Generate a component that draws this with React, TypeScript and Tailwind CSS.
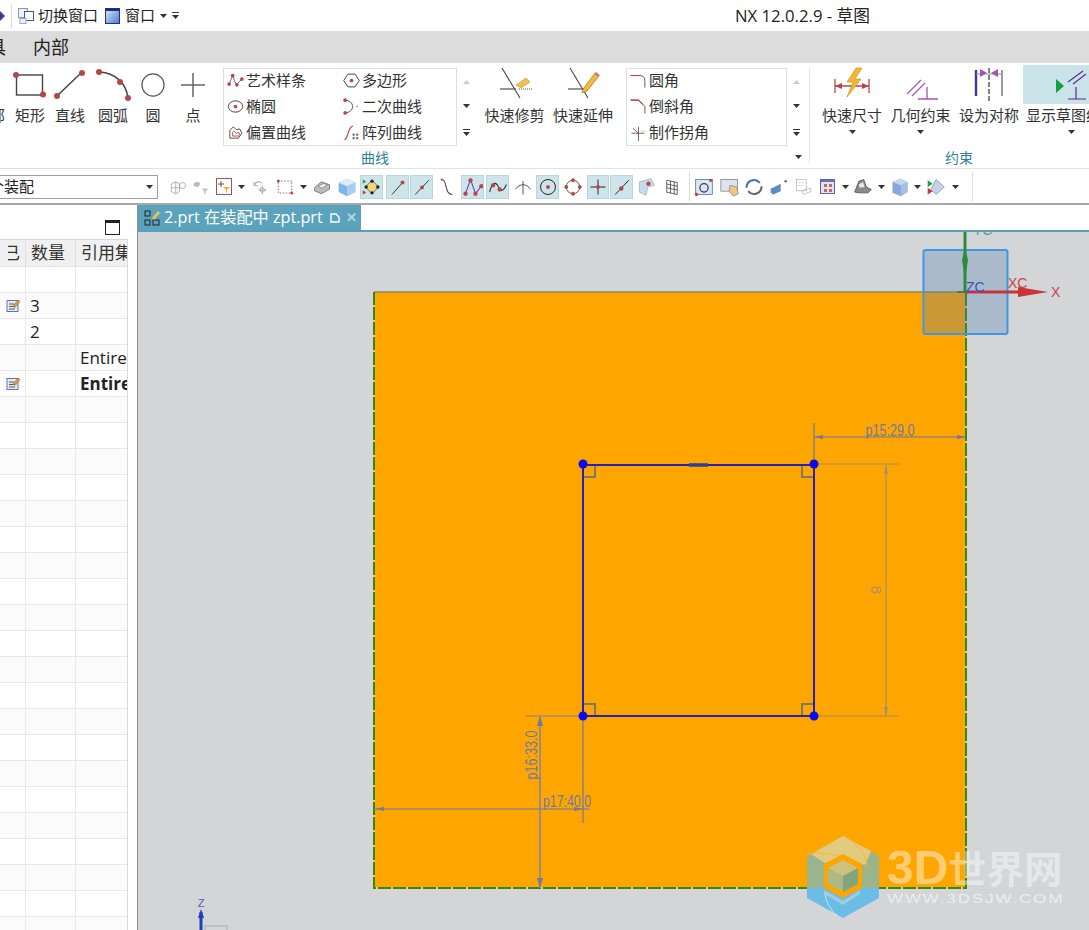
// NX sketch window: title bar, ribbon, toolbar, assembly navigator and graphics area

const FONT = '"Open Sans", "Noto Sans CJK SC", sans-serif';
const RED = '#b5474a';
const DIM = '#6f7aa0';

const Dot = ({ x, y, r = 2.6 }: { x: number; y: number; r?: number }) => <circle cx={x} cy={y} r={r} fill={RED} />;

const Svg = ({ size = 18, vb = 24, children }: { size?: number; vb?: number; children: React.ReactNode }) => (
  <svg width={size} height={size} viewBox={`0 0 ${vb} ${vb}`} fill="none" className="shrink-0">
    {children}
  </svg>
);

const Caret = () => (
  <svg width="7" height="4" viewBox="0 0 7 4" className="shrink-0">
    <path d="M0 0h7L3.5 4z" fill="#333" />
  </svg>
);

const CaretLine = () => (
  <svg width="7" height="7" viewBox="0 0 7 7" className="shrink-0">
    <path d="M0 0.5h7" stroke="#333" />
    <path d="M0 3h7L3.5 7z" fill="#333" />
  </svg>
);

// large ribbon icons, 40 x 40
const bigIcons: Record<string, React.ReactNode> = {
  arc0: <><path d="M2 6c12-2 18 8 18 10" stroke="#444" strokeWidth="1.5" /><Dot x={19} y={19} r={3} /></>,
  rect: <><rect x="6.5" y="10" width="26" height="20" stroke="#444" strokeWidth="1.4" /><Dot x={6} y={10} r={3} /><Dot x={33} y={29.5} r={3} /></>,
  line: <><path d="M7 31L32 7" stroke="#444" strokeWidth="1.5" /><Dot x={7} y={31} r={3} /><Dot x={32} y={8} r={3} /></>,
  arc: <><path d="M7 7c14 1 26 10 28 26" stroke="#444" strokeWidth="1.5" /><Dot x={6} y={7} r={3} /><Dot x={27} y={17} r={3} /><Dot x={35} y={33} r={3} /></>,
  circle: <circle cx="20" cy="20" r="13" stroke="#555" strokeWidth="1.4" />,
  point: <path d="M20 8v24M8 20h24" stroke="#666" strokeWidth="1.5" />,
};

const BigIcon = ({ name }: { name: string }) => <svg width="40" height="40" viewBox="0 0 40 40" fill="none">{bigIcons[name]}</svg>;

const TrimIcon = ({ pencil }: { pencil?: boolean }) => (
  <svg width="40" height="40" viewBox="0 0 40 40" fill="none">
    <path d="M7 3L25 33" stroke="#444" strokeWidth="1.1" />
    <path d="M5 24h16" stroke="#444" strokeWidth="1.1" />
    {pencil ? (
      <>
        <path d="M20 24L32 8l4 3-12 15-5 2z" fill="#f0b93a" stroke="#a87b22" strokeWidth="0.7" />
        <path d="M31 9l2-2 4 3-2 2z" fill="#d9767a" />
      </>
    ) : (
      <>
        <path d="M21 20l10-7 4 4-9 6z" fill="#f2c14e" stroke="#c09436" strokeWidth="0.6" />
        <path d="M24 24h14" stroke="#555" strokeDasharray="1 1" />
      </>
    )}
  </svg>
);

const tools = [
  { w: 25, label: '部', icon: <div className="-ml-[18px]"><BigIcon name="arc0" /></div> },
  { w: 40, label: '矩形', icon: <BigIcon name="rect" /> },
  { w: 40, label: '直线', icon: <BigIcon name="line" /> },
  { w: 46, label: '圆弧', icon: <BigIcon name="arc" /> },
  { w: 34, label: '圆', icon: <BigIcon name="circle" /> },
  { w: 46, label: '点', icon: <BigIcon name="point" /> },
];

const Tool = ({ w, label, icon, caret, active }: { w: number; label: string; icon: React.ReactNode; caret?: boolean; active?: boolean }) => (
  <div className="-mt-[3px] flex shrink-0 flex-col items-center" style={{ width: w }}>
    <div className={`flex h-[39px] w-full items-center justify-center ${active ? 'bg-[#c9e3e9]' : ''}`}>{icon}</div>
    <div className="flex h-[22px] items-center justify-center whitespace-nowrap text-[15px] text-[#333]">{label}</div>
    {caret && <div className="mt-[4px]"><Caret /></div>}
  </div>
);

const spline = (
  <Svg size={17}><path d="M3 17L8 5l5 13 8-8" stroke="#666" strokeWidth="1.3" /><Dot x={3} y={17} /><Dot x={8} y={5} /><Dot x={14} y={18} /><Dot x={21} y={10} /></Svg>
);
const ellipse = <Svg size={17}><ellipse cx="12" cy="12" rx="10" ry="8" stroke="#444" strokeWidth="1.4" /><Dot x={12} y={12} /></Svg>;
const offset = <Svg size={17}><path d="M4 20V9l5-5 4 4 5-1 3 6-5 7z" stroke="#444" strokeWidth="1.3" /><path d="M8 17v-5l2-2 3 3 4-1 1 3-2 2z" stroke={RED} strokeWidth="1.3" /></Svg>;
const polygon = <Svg size={17}><path d="M7 3h10l6 9-6 9H7l-6-9z" stroke="#444" strokeWidth="1.4" /><Dot x={12} y={12} /></Svg>;
const conic = <Svg size={17}><path d="M3 3c14 1 14 17 0 18" stroke="#444" strokeWidth="1.4" /><Dot x={3} y={3} /><Dot x={3} y={21} /><circle cx="20" cy="12" r="1" fill="#555" /></Svg>;
const pattern = <Svg size={17}><path d="M2 22C8 22 6 4 14 3" stroke={RED} strokeWidth="1.6" /><path d="M14 14h2v2h-2zM19 14h2v2h-2zM14 19h2v2h-2zM19 19h2v2h-2z" stroke="#444" /></Svg>;
const fillet = <Svg size={17}><path d="M1 5h13c5 0 7 3 7 8v9" stroke="#444" strokeWidth="1.2" /><path d="M1 5h13" stroke={RED} strokeWidth="1.5" /></Svg>;
const chamfer = <Svg size={17}><path d="M1 3h11l9 9v10" stroke="#444" strokeWidth="1.2" /><path d="M1 3h11l6 6" stroke={RED} strokeWidth="1.5" /></Svg>;
const corner = <Svg size={17}><path d="M12 4v20M2 13h18" stroke="#444" strokeWidth="1.1" /><path d="M4 6l8 7" stroke={RED} strokeWidth="1.3" /><path d="M15 10h7" stroke="#888" strokeDasharray="1 1" /></Svg>;

const GalleryItem = ({ icon, label, w }: { icon: React.ReactNode; label: string; w: number }) => (
  <div className="flex h-[26px] items-center pb-[4px]" style={{ width: w }}>
    <div className="flex w-[22px] shrink-0 justify-center">{icon}</div>
    <span className="whitespace-nowrap text-[15px] text-[#333]">{label}</span>
  </div>
);

const GalleryScroll = () => (
  <div className="flex h-[78px] w-[19px] shrink-0 flex-col items-center justify-around pt-[2px]">
    <svg width="7" height="4" viewBox="0 0 7 4"><path d="M0 4h7L3.5 0z" fill="#ccc" /></svg>
    <Caret />
    <CaretLine />
  </div>
);

// small toolbar icons, each one sits in a cell of its own width
const g = '#9a9a9a';
const toolbarIcons: Record<string, React.ReactNode> = {
  parts: <Svg><path d="M3 8l6-3 5 3v10l-5 3-6-3z" stroke={g} /><path d="M9 5v16M3 13h11" stroke={g} /><circle cx="18" cy="10" r="4" stroke={g} /></Svg>,
  funnel: <Svg><path d="M2 8c3-4 7-4 9 0l-3 4-5-1z" fill="#bbb" /><path d="M13 14h9l-4 4v4l-2-1v-3z" fill="#c4c4c4" /></Svg>,
  select: <svg width="16" height="17" viewBox="0 0 16 17" fill="none"><rect x="0.5" y="0.5" width="15" height="16" fill="#fff" stroke="#a05050" /><path d="M5 3v6M2 6h6" stroke="#555" /><path d="M7 9h7l-3 3v3l-1-1v-2z" fill="#efb136" /></svg>,
  snap: <Svg><path d="M5 9c2-5 7-5 9-2" stroke={g} strokeWidth="1.4" /><path d="M4 5v5h5" stroke={g} /><path d="M15 10v12M9 16h12" stroke={g} /><circle cx="15" cy="16" r="3" stroke={g} /></Svg>,
  dashed: <Svg><rect x="3" y="4" width="18" height="16" stroke="#444" strokeDasharray="2 2" /><Dot x={3} y={4} r={2} /><Dot x={21} y={20} r={2} /></Svg>,
  solid: <Svg><path d="M2 13l9-8 11 4v6l-11 6-9-4z" fill="#bdbdbd" stroke="#666" /><path d="M7 11l7-4 5 2-7 5z" fill="#eee" stroke="#777" /></Svg>,
  cube: <Svg size={20}><path d="M2 7l10-5 10 5v11l-10 5-10-5z" fill="#7db5e8" /><path d="M2 7l10 4 10-4-10-5z" fill="#dcecf8" /><path d="M12 11v12l10-5V7z" fill="#a8cdf0" /></Svg>,
  nodes: <Svg size={20}><path d="M12 4l8 8-8 8-8-8z" fill="#f3d675" stroke="#555" /><circle cx="12" cy="5" r="2" fill="#222" /><circle cx="12" cy="19" r="2" fill="#222" /><circle cx="5" cy="12" r="2" fill="#222" /><circle cx="19" cy="12" r="2" fill="#222" /><path d="M1 3l4 2.500-4 2.500z" fill="#1aa23a" /><path d="M1 16l4 2.500-4 2.500z" fill="#c33" /></Svg>,
  lineEnd: <Svg><path d="M4 22L19 5" stroke="#333" strokeWidth="1.3" /><Dot x={18} y={6} /></Svg>,
  lineMid: <Svg><path d="M3 22L21 3" stroke="#333" strokeWidth="1.3" /><Dot x={12} y={12.500} /></Svg>,
  tangent: <Svg><path d="M5 2c8 0 3 20 14 20" stroke="#444" strokeWidth="1.4" /><Dot x={5} y={2} r={1.5} /></Svg>,
  spline: <Svg size={20}><path d="M3 20L9 3l6 17 7-9" stroke="#7a40a8" strokeWidth="1.3" /><Dot x={3} y={20} /><Dot x={9} y={4} /><Dot x={15} y={20} /><Dot x={22} y={11} /></Svg>,
  wave: <Svg size={20}><path d="M2 18C6 2 11 8 13 13s6 4 9-4" stroke="#333" strokeWidth="1.3" /><Dot x={6} y={10} /><Dot x={14} y={15} /></Svg>,
  cross: <Svg><path d="M12 4v18M2 15C7 7 17 7 22 15" stroke="#444" strokeWidth="1.2" /></Svg>,
  circleDot: <Svg><circle cx="12" cy="12" r="10" stroke="#222" strokeWidth="1.3" /><Dot x={12} y={12} /></Svg>,
  circlePts: <Svg><circle cx="12" cy="12" r="9" stroke="#555" strokeWidth="1.3" /><Dot x={12} y={3} /><Dot x={3} y={12} /><Dot x={21} y={12} /><Dot x={12} y={21} /></Svg>,
  plus: <Svg><path d="M12 2v20M2 12h20" stroke="#222" strokeWidth="1.3" /><Dot x={12} y={12} /></Svg>,
  lineDot: <Svg><path d="M3 22L21 3" stroke="#222" strokeWidth="1.3" /><Dot x={11} y={14} r={3} /></Svg>,
  surface: <Svg size={20}><path d="M4 6l14-4 4 8-8 2-2 10-8-4z" fill="#c6dced" stroke="#9bb" /><Dot x={15} y={8} /></Svg>,
  grid: <Svg><path d="M5 3l14 3v16L5 19zM5 8l14 3M5 13l14 3M10 4v16M15 5v16" stroke="#444" strokeWidth="1.1" /></Svg>,
  zoomBox: <Svg size={20}><rect x="2" y="3" width="20" height="18" fill="#dce6f2" stroke="#5a78a8" /><circle cx="12" cy="13" r="5" stroke="#345" strokeWidth="1.5" /><Dot x={20} y={4} r={2} /><Dot x={3} y={21} r={2} /></Svg>,
  pan: <Svg size={20}><rect x="1" y="3" width="20" height="14" fill="#dde3ec" stroke="#888" /><path d="M12 10l8 2 2 8-6 3-5-6z" fill="#edc78a" stroke="#a87" /></Svg>,
  rotate: <Svg size={20}><path d="M19 7A9 9 0 003 13" stroke="#4a6ea8" strokeWidth="2.4" /><path d="M5 17a9 9 0 0016-6" stroke="#666" strokeWidth="2.4" /></Svg>,
  wedge: <Svg size={20}><path d="M2 14l12-6v9l-9 4-3-2z" fill="#5b8cc8" /><Dot x={20} y={5} r={1.500} /></Svg>,
  ghost: <Svg><rect x="2" y="2" width="13" height="15" stroke="#b5b5b5" /><path d="M9 17l12-4v5l-10 4z" stroke="#b5b5b5" /><path d="M5 6h2M9 6h2M5 10h2M9 10h2" stroke="#bbb" /></Svg>,
  views: <svg width="15" height="15" viewBox="0 0 15 15"><rect x="0.5" y="0.5" width="14" height="14" fill="#dfe4f6" stroke="#5c62a8" /><rect x="1" y="1" width="13" height="2" fill="#6c70b5" /><path d="M4 5h3v3H4zM9 5h3v3H9zM4 10h3v3H4zM9 10h3v3H9z" fill="#c66" /></svg>,
  shade: <Svg size={20}><path d="M2 18l5-13 6-2 3 9 6 3-4 4H6z" fill="#8a8a8a" stroke="#555" /><path d="M7 9l5-3 2 6-6 1z" fill="#e8e8e8" /></Svg>,
  box: <Svg size={20}><path d="M3 6l10-4 8 4v12l-8 5-10-4z" fill="#89a7d8" /><path d="M3 6l10 4 8-4-8-4z" fill="#c5d6ef" /><path d="M13 10v13l8-5V6z" fill="#a7bee3" /></Svg>,
  diamond: <Svg size={20}><path d="M12 3l10 9-10 9-6-6z" fill="#c4d2ea" stroke="#8899b8" /><path d="M2 4l6 4-6 4z" fill="#1aa23a" /><path d="M2 13l6 4-6 4z" fill="#c33" /></Svg>,
};

type Cell = { w: number; name?: string; hl?: boolean; caret?: boolean; rule?: boolean; mr?: number };

const cells: Cell[] = [
  { w: 23, name: 'parts' },
  { w: 23, name: 'funnel' },
  { w: 24, name: 'select' },
  { w: 11, caret: true },
  { w: 25, name: 'snap' },
  { w: 26, name: 'dashed' },
  { w: 11, caret: true },
  { w: 25, name: 'solid' },
  { w: 26, name: 'cube' },
  { w: 23, name: 'nodes', hl: true, mr: 3 },
  { w: 23, name: 'lineEnd', hl: true, mr: 1 },
  { w: 23, name: 'lineMid', hl: true },
  { w: 28, name: 'tangent' },
  { w: 23, name: 'spline', hl: true, mr: 2 },
  { w: 23, name: 'wave', hl: true },
  { w: 27, name: 'cross' },
  { w: 23, name: 'circleDot', hl: true },
  { w: 28, name: 'circlePts' },
  { w: 22, name: 'plus', hl: true, mr: 1 },
  { w: 23, name: 'lineDot', hl: true },
  { w: 26, name: 'surface' },
  { w: 25, name: 'grid' },
  { w: 6, rule: true },
  { w: 27, name: 'zoomBox' },
  { w: 25, name: 'pan' },
  { w: 24, name: 'rotate' },
  { w: 26, name: 'wedge' },
  { w: 23, name: 'ghost' },
  { w: 25, name: 'views' },
  { w: 10, caret: true },
  { w: 26, name: 'shade' },
  { w: 10, caret: true },
  { w: 27, name: 'box' },
  { w: 9, caret: true },
  { w: 28, name: 'diamond' },
  { w: 11, caret: true },
  { w: 12, rule: true },
];

const ToolbarCell = ({ c }: { c: Cell }) => {
  if (c.rule) {
    return <div className="flex h-[29px] shrink-0 justify-end" style={{ width: c.w }}><div className="w-px bg-[#dcdcdc]" /></div>;
  }
  return (
    <div
      className={`flex h-[24px] shrink-0 items-center justify-center ${c.hl ? 'border border-[#b8d6dd] bg-[#cde5ea]' : ''}`}
      style={{ width: c.w, marginRight: c.mr ?? 0 }}
    >
      {c.caret ? <Caret /> : toolbarIcons[c.name!]}
    </div>
  );
};

const rows = [
  { icon: false, qty: '', ref: '', bold: false },
  { icon: true, qty: '3', ref: '', bold: false },
  { icon: false, qty: '2', ref: '', bold: false },
  { icon: false, qty: '', ref: 'Entire', bold: false },
  { icon: true, qty: '', ref: 'Entire', bold: true },
  ...Array.from({ length: 21 }, () => ({ icon: false, qty: '', ref: '', bold: false })),
];

const NoteIcon = () => (
  <svg width="15" height="15" viewBox="0 0 15 15" fill="none">
    <rect x="1" y="2.500" width="11" height="11" fill="#e6e9f8" stroke="#6a70b8" />
    <path d="M3 6h5M3 8.500h6M3 11h6" stroke="#333" strokeWidth="0.8" />
    <path d="M7 8l5-6 2 1.500-5 6z" fill="#e0a030" stroke="#7a5a20" strokeWidth="0.5" />
  </svg>
);

const Navigator = () => (
  <div className="flex w-[138px] shrink-0 flex-col border-r border-[#8f8f8f] bg-white">
    <div className="flex h-[34px] shrink-0 items-end justify-end pr-[17px] pb-[4px]">
      <div className="h-[15px] w-[15px] border border-[#222] border-t-[3px]" />
    </div>
    <div className="w-[128px] border-r border-[#d8d8d8] border-t border-t-[#d8d8d8]">
      <div className="flex h-[27px] border-b border-[#e3e3e3] bg-[#f0f0f0] text-[17px] text-[#333]">
        <div className="flex w-[26px] items-center justify-end border-r border-[#e0e0e0] pr-[5px]">
          <div className="flex w-[12px] justify-end overflow-hidden whitespace-nowrap">已</div>
        </div>
        <div className="flex w-[50px] items-center whitespace-nowrap border-r border-[#e0e0e0] pl-[5px]">数量</div>
        <div className="flex flex-1 items-center overflow-hidden whitespace-nowrap pl-[5px]">引用集</div>
      </div>
      {rows.map((r, i) => (
        <div key={i} className={`flex h-[26px] border-b border-[#e8e8e8] text-[17px] leading-[24px] text-[#222] ${i % 2 ? 'bg-[#fbfbfb]' : 'bg-white'}`}>
          <div className="flex w-[26px] items-center justify-end border-r border-[#eaeaea] pr-[4px]">{r.icon && <NoteIcon />}</div>
          <div className="flex w-[50px] items-center border-r border-[#eaeaea] pl-[4px]">{r.qty}</div>
          <div className={`flex flex-1 items-center overflow-hidden pl-[4px] ${r.bold ? 'font-bold' : ''}`}>{r.ref}</div>
        </div>
      ))}
    </div>
  </div>
);

const DimText = ({ x, y, w, rotate, children }: { x: number; y: number; w: number; rotate?: boolean; children: string }) => (
  <text
    x={x}
    y={y}
    textLength={w}
    lengthAdjust="spacingAndGlyphs"
    textAnchor="middle"
    fontSize="17"
    fontFamily='"Liberation Sans", sans-serif'
    fill={DIM}
    transform={rotate ? `rotate(-90 ${x} ${y})` : undefined}
  >
    {children}
  </text>
);

const Corner = ({ x, y, sx, sy }: { x: number; y: number; sx: number; sy: number }) => (
  <path d={`M${x + sx * 12} ${y}v${sy * 12}h${-sx * 12}`} stroke="#7d7a62" strokeWidth="2" fill="none" />
);

// the sketch itself, in page coordinates
const Sketch = () => (
  <svg viewBox="138 232 951 698" className="block h-full w-full" fill="none">
    <rect x="374" y="292" width="592" height="596" fill="#ffa500" />
    <path d="M374 292H966" stroke="#8d8a66" strokeWidth="1.6" />
    <path d="M374 292V888H966V292" stroke="#ffc65c" strokeWidth="2" />
    <path d="M374 292V888H966V292" stroke="#2f8a17" strokeWidth="2" strokeDasharray="13 2" />

    <path d="M814 423V465M814 437H966" stroke={DIM} strokeWidth="1.2" />
    <path d="M814 437l9-2v4zM966 437l-9-2v4z" fill={DIM} />
    <DimText x={890} y={436} w={49}>p15:29.0</DimText>

    <path d="M814 464H899M814 716H899M886 465V716" stroke="#a3906a" strokeWidth="1.2" />
    <path d="M886 465l-2 9h4zM886 716l-2-9h4z" fill="#9c8e72" />
    <text x="876" y="595" fontSize="15" textAnchor="middle" fontFamily='"Liberation Sans", sans-serif' fill="#a8926a" transform="rotate(90 876 590)">8</text>

    <path d="M526 716H583" stroke="#a3906a" strokeWidth="1.4" />
    <path d="M540 716V888" stroke="#9a8c86" strokeWidth="2" />
    <path d="M540 716l-3 10h6zM540 888l-3-10h6z" fill={DIM} />
    <DimText x={537} y={755} w={49} rotate>p16:33.0</DimText>

    <path d="M583 716V823M374 809H590" stroke={DIM} strokeWidth="1.2" />
    <path d="M375 809l9-2v4zM583 809l-9-2v4z" fill={DIM} />
    <DimText x={567} y={807} w={48}>p17:40.0</DimText>

    <Corner x={583} y={465} sx={1} sy={1} />
    <Corner x={814} y={465} sx={-1} sy={1} />
    <Corner x={583} y={716} sx={1} sy={-1} />
    <Corner x={814} y={716} sx={-1} sy={-1} />
    <rect x="583" y="465" width="231" height="251" stroke="#2622b8" strokeWidth="2" />
    <path d="M689 465H708" stroke="#2a3fa0" strokeWidth="3.5" />
    <circle cx="583" cy="464" r="4.500" fill="#0a0af0" />
    <circle cx="814" cy="464" r="4.500" fill="#0a0af0" />
    <circle cx="583" cy="716" r="4.500" fill="#0a0af0" />
    <circle cx="814" cy="716" r="4.500" fill="#0a0af0" />

    <rect x="923.500" y="250" width="84" height="84" rx="2" fill="#4f7fb0" fillOpacity="0.3" stroke="#3b9ae8" strokeWidth="2" />
    <path d="M965 232V292" stroke="#2e8b3a" strokeWidth="3" />
    <path d="M965 248l-3 12 3 20 3-20z" fill="#2e8b3a" />
    <path d="M965 292H1026" stroke="#c9333a" strokeWidth="3" />
    <path d="M1018 287l30 5-30 5z" fill="#c9333a" />
    <path d="M957 292H966" stroke="#2f7a3a" strokeWidth="1.5" />
    <text x="1008" y="288" fontSize="14" fontFamily='"Liberation Sans", sans-serif' fill="#c9434a">XC</text>
    <text x="1051" y="297" fontSize="14" fontFamily='"Liberation Sans", sans-serif' fill="#c9434a">X</text>
    <text x="966" y="292" fontSize="14" fontFamily='"Liberation Sans", sans-serif' fill="#3a52c0">ZC</text>
    <text x="973" y="235" fontSize="14" fontFamily='"Liberation Sans", sans-serif' fill="#6f9a80">YC</text>

    <path d="M205 930V926H227V930" stroke="#b9bbbd" strokeWidth="1.5" />
    <path d="M201 930V912" stroke="#1d3fc0" strokeWidth="3" />
    <path d="M201 909l-3 9h6z" fill="#1d3fc0" />
    <text x="201" y="907" fontSize="11" textAnchor="middle" fontFamily='"Liberation Sans", sans-serif' fill="#4a5fc0">Z</text>
  </svg>
);

const Watermark = () => (
  <div className="absolute left-[669px] top-[631px] flex items-start">
    <svg width="72" height="82" viewBox="0 0 72 82" fill="none" className="shrink-0">
      <path d="M36 0l36 20v32H0V20z" fill="#9ab48c" />
      <path d="M0 52h72v10L36 82 0 62z" fill="#6cbde6" />
      <path d="M36 0l28 15-6 14-22-8-18 6-14-9z" fill="#e2cb7e" />
      <path d="M2 18c14-3 30 2 34 3" stroke="#ffb52e" />
      <path d="M36 0c14 6 24 18 24 32" stroke="#ffb52e" />
      <path d="M36 18l19 10v24l-19 10-19-10V28z" fill="#ffa500" />
      <path d="M36 24l15 8-15 8-15-8z" fill="#cdc27e" />
      <path d="M21 32l15 8v16l-15-8z" fill="#adb985" />
      <path d="M51 32l-15 8v16l15-8z" fill="#7fa67c" />
      <path d="M17 54l19 11 17-11v4l-17 11-19-11z" fill="#d3d5d7" fillOpacity="0.55" />
      <path d="M18 58c2 10 6 16 12 22" stroke="#fff" strokeOpacity="0.6" />
    </svg>
    <div className="ml-[8px] flex flex-col">
      <div className="mt-[10px] flex h-[44px] items-center whitespace-nowrap font-bold text-white/45">
        <span className="text-[48px] [font-family:'Liberation_Sans',sans-serif]">3D</span>
        <span className="text-[38px]">世界网</span>
      </div>
      <div className="mt-[2px] origin-left scale-x-[1.3] whitespace-nowrap text-[13px] leading-[14px] tracking-[1.5px] text-white/60 [font-family:'Liberation_Sans',sans-serif]">WWW.3DSJW.COM</div>
    </div>
  </div>
);

export default function App() {
  return (
    <div className="flex h-[930px] w-[1089px] flex-col overflow-hidden bg-white" style={{ fontFamily: FONT }}>
      {/* title bar */}
      <div className="flex h-[31px] shrink-0 items-center text-[15px] text-[#222]">
        <svg width="5" height="10" viewBox="0 0 5 10"><path d="M0 0l5 5-5 5z" fill="#3b3ba0" /></svg>
        <div className="ml-[6px] h-[24px] w-px bg-[#dcdcdc]" />
        <div className="ml-[6px]">
          <svg width="16" height="16" viewBox="0 0 16 16" fill="none">
            <rect x="0.500" y="0.500" width="9" height="9" stroke="#8a96b8" fill="#eef2f8" />
            <rect x="6.500" y="3.500" width="9" height="9" stroke="#3557a8" fill="#fff" />
            <rect x="2" y="10.500" width="6" height="5" stroke="#9aa7c4" fill="#eef2f8" />
          </svg>
        </div>
        <span className="ml-[4px] whitespace-nowrap">切换窗口</span>
        <div className="ml-[7px] h-[16px] w-[15px] border border-[#20307c] bg-gradient-to-br from-[#dde8f6] to-[#4a7fd0]">
          <div className="h-[2px] bg-[#1d2f7c]" />
        </div>
        <span className="ml-[5px] whitespace-nowrap">窗口</span>
        <div className="ml-[5px]"><Caret /></div>
        <div className="ml-[5px]"><CaretLine /></div>
        <span className="ml-[556px] whitespace-nowrap text-[16.7px]">NX 12.0.2.9 - 草图</span>
      </div>

      {/* menu tabs */}
      <div className="flex h-[32px] shrink-0 items-center bg-[#dcdcdc] text-[18px] text-[#222]">
        <span className="-ml-[12px] w-[45px]">具</span>
        <span>内部</span>
      </div>

      {/* ribbon */}
      <div className="flex h-[106px] shrink-0 flex-col border-b border-[#e2e2e2]">
        <div className="flex h-[84px] pt-[5px]">
          <div className="-ml-[15px] flex shrink-0">
            {tools.map((t) => <Tool key={t.label} {...t} />)}
          </div>
          <div className="ml-[7px] flex h-[78px] w-[234px] shrink-0 flex-wrap border border-[#dedede]">
            <GalleryItem icon={spline} label="艺术样条" w={116} />
            <GalleryItem icon={polygon} label="多边形" w={116} />
            <GalleryItem icon={ellipse} label="椭圆" w={116} />
            <GalleryItem icon={conic} label="二次曲线" w={116} />
            <GalleryItem icon={offset} label="偏置曲线" w={116} />
            <GalleryItem icon={pattern} label="阵列曲线" w={116} />
          </div>
          <GalleryScroll />
          <div className="ml-[4px] flex shrink-0">
            <Tool w={69} label="快速修剪" icon={<TrimIcon />} />
            <Tool w={68} label="快速延伸" icon={<TrimIcon pencil />} />
          </div>
          <div className="ml-[9px] flex h-[78px] w-[161px] shrink-0 flex-col border border-[#dedede]">
            <GalleryItem icon={fillet} label="圆角" w={150} />
            <GalleryItem icon={chamfer} label="倒斜角" w={150} />
            <GalleryItem icon={corner} label="制作拐角" w={150} />
          </div>
          <GalleryScroll />
          <div className="ml-[3px] h-[95px] w-px shrink-0 bg-[#e4e4e4]" />
          <div className="ml-[8px] flex shrink-0">
            <Tool w={68} caret label="快速尺寸" icon={
              <svg width="40" height="36" viewBox="0 0 40 36" fill="none">
                <path d="M3 12v14M37 12v14M3 19h34" stroke="#b5474a" strokeWidth="1.3" />
                <path d="M3 19l7-3v6zM37 19l-7-3v6z" fill="#b5474a" />
                <path d="M24 1l-9 14h6l-6 15 14-18h-6l7-11z" fill="#f2b632" stroke="#c98a1c" strokeWidth="0.6" />
              </svg>
            } />
            <Tool w={69} caret label="几何约束" icon={
              <svg width="40" height="36" viewBox="0 0 40 36" fill="none">
                <path d="M6 27L20 13M11 29L24 16" stroke="#a553b8" strokeWidth="1.2" />
                <path d="M26 20v12M17 32h20" stroke="#a553b8" strokeWidth="1.3" />
              </svg>
            } />
            <Tool w={68} label="设为对称" icon={
              <svg width="40" height="36" viewBox="0 0 40 36" fill="none">
                <path d="M7 3v26" stroke="#3a3a90" strokeWidth="2.4" />
                <path d="M33 3v26" stroke="#7f7f9a" strokeWidth="1.6" />
                <path d="M20 1v34" stroke="#333" strokeWidth="1.2" strokeDasharray="5 2" />
                <path d="M7 7h26" stroke="#8a8a9a" />
                <path d="M18 6l-7-4v8zM22 6l7-4v8z" fill="#a553b8" />
              </svg>
            } />
            <Tool w={96} caret active label="显示草图约束" icon={
              <svg width="62" height="38" viewBox="0 0 62 38" fill="none">
                <path d="M16 13l8 7-8 7z" fill="#10a040" />
                <path d="M28 16L43 5M33 18L46 8" stroke="#5b2b8a" strokeWidth="1.1" />
                <path d="M36 21v12M28 33h18" stroke="#5b2b8a" strokeWidth="1.2" />
              </svg>
            } />
          </div>
        </div>
        <div className="flex h-[20px] items-center text-[14px] text-[#2f7f95]">
          <div className="w-[750px] shrink-0 text-center">曲线</div>
          <div className="flex w-[52px] shrink-0 justify-end"><Caret /></div>
          <div className="w-[8px] shrink-0" />
          <div className="w-[298px] shrink-0 text-center">约束</div>
        </div>
      </div>

      {/* toolbar */}
      <div className="flex h-[36px] shrink-0 items-center border-b-2 border-[#a8a8a8] pt-[1px]">
        <div className="-ml-[2px] flex h-[24px] w-[160px] shrink-0 items-center justify-between border border-[#a0a0a0] pr-[4px] text-[15px] text-[#222]">
          <span className="-ml-[10px] whitespace-nowrap">个装配</span>
          <Caret />
        </div>
        <div className="ml-[8px] flex items-center">
          {cells.map((c, i) => <ToolbarCell key={i} c={c} />)}
        </div>
      </div>

      {/* body */}
      <div className="flex min-h-0 flex-1">
        <Navigator />
        <div className="relative flex min-w-0 flex-1 flex-col bg-[#d3d5d7]">
          <div className="flex h-[27px] shrink-0 border-b-2 border-[#5a9fb6] bg-white">
            <div className="flex h-[25px] w-[223px] items-center bg-[#5ba3bd] pl-[6px] text-[16.2px] text-white">
              <svg width="17" height="16" viewBox="0 0 17 16" fill="none" className="shrink-0">
                <rect x="1" y="1" width="5" height="5" stroke="#222" />
                <rect x="1" y="10" width="5" height="5" stroke="#222" />
                <rect x="9" y="10" width="6" height="5" stroke="#222" />
                <path d="M8 8l6-7 2 2-6 7z" fill="#e8c35a" />
              </svg>
              <span className="ml-[3px] whitespace-nowrap">2.prt 在装配中 zpt.prt</span>
              <svg width="10" height="10" viewBox="0 0 10 10" fill="none" className="ml-[7px] shrink-0">
                <path d="M1 1h5l3 3v5H1z" stroke="#fff" strokeWidth="1.4" />
              </svg>
              <span className="ml-[6px] text-[13px] font-bold text-[#b8d4de]">✕</span>
            </div>
          </div>
          <div className="min-h-0 flex-1">
            <Sketch />
          </div>
          <Watermark />
        </div>
      </div>
    </div>
  );
}
